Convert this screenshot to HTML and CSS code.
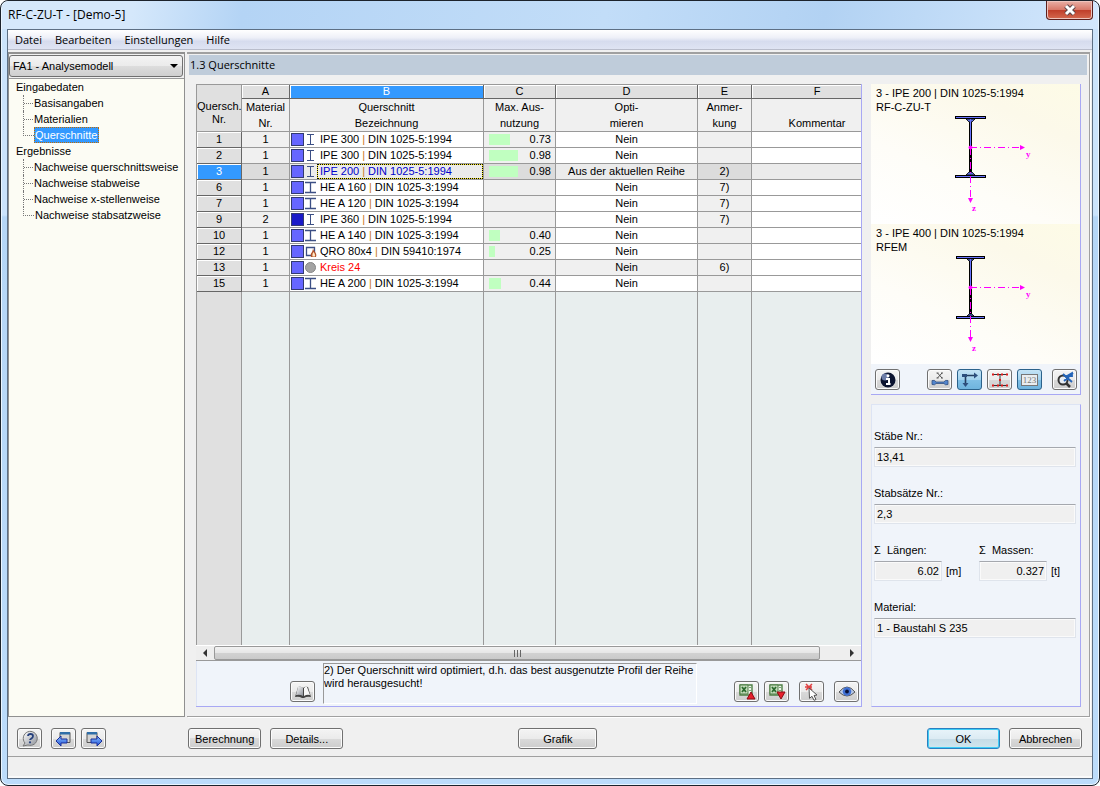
FILE: index.html
```html
<!DOCTYPE html>
<html lang="de">
<head>
<meta charset="utf-8">
<title>RF-C-ZU-T - [Demo-5]</title>
<link rel="stylesheet" href="styles.css">
</head>
<body>
<svg class="defs" aria-hidden="true">
  <defs>
    <linearGradient id="blue-fill" x1="0" y1="0" x2="0" y2="1"><stop offset="0" stop-color="#8fc4ff"/><stop offset="1" stop-color="#1d50d8"/></linearGradient>
    <linearGradient id="grey-fill" x1="0" y1="0" x2="1" y2="1"><stop offset="0" stop-color="#ffffff"/><stop offset="1" stop-color="#8b8f98"/></linearGradient>
    <symbol id="ipe" viewBox="0 0 13 13"><path d="M3 1.500h7M3 11.500h7M6.500 1v11" stroke="#3c4f85" fill="none"/></symbol>
    <symbol id="hea" viewBox="0 0 13 13"><path d="M1 1.500h11M1 11.500h11M6.500 1v11" stroke="#3c4f85" stroke-width="1.300" fill="none"/></symbol>
    <symbol id="qro" viewBox="0 0 13 13"><path d="M2.500 2.500h8v8h-8z" stroke="#3c4f85" stroke-width="1.300" fill="#fff"/><path d="M9 3q0 2 2 4 2 2 1 5H7q-1-3 1-5 1-2 1-4z" fill="#b4542a"/><path d="M9.500 7q2 2 1.500 4.500H8.500q-.5-2.500 1-4.500z" fill="#ffe9c8"/></symbol>
    <symbol id="kreis" viewBox="0 0 13 13"><circle cx="6.500" cy="6.500" r="5" fill="#a3a3a3" stroke="#858585"/></symbol>
    <symbol id="excel" viewBox="0 0 18 18"><path d="M2 2h12v10H2z" fill="#eef5ea" stroke="#4f7f46" stroke-width="1.400"/><path d="M2 2h8v9H2z" fill="#c4dcbb" stroke="#4f7f46"/><path d="M4 4l4 5M8 4L4 9" stroke="#2b6a2e" stroke-width="1.800"/><path d="M11 4.500h3M11 7.500h3" stroke="#7ca574"/></symbol>
  </defs>
</svg>
<div class="window">
  <header class="titlebar">
    <h1>RF-C-ZU-T - [Demo-5]</h1>
    <button class="close" type="button" aria-label="Schließen"><svg width="16" height="12" viewBox="0 0 16 12"><path d="M4 2l8 8M12 2l-8 8" stroke="#5a4448" stroke-width="5"/><path d="M4 2l8 8M12 2l-8 8" stroke="#fff" stroke-width="3"/></svg></button>
  </header>
  <div class="client">
    <nav class="menubar" aria-label="Menü">
      <button type="button">Datei</button><button type="button">Bearbeiten</button><button type="button">Einstellungen</button><button type="button">Hilfe</button>
    </nav>
    <div class="workspace">
      <aside class="sidebar">
        <div class="case">
          <select aria-label="Analysefall"><option>FA1 - Analysemodell</option></select>
          <svg width="8" height="4" aria-hidden="true"><path d="M0 0h8L4 4z"/></svg>
        </div>
        <nav class="tree" aria-label="Navigator">
          <a href="#eingabe">Eingabedaten</a>
          <ul>
            <li><a href="#basis">Basisangaben</a></li>
            <li><a href="#material">Materialien</a></li>
            <li><a class="active" href="#querschnitte">Querschnitte</a></li>
          </ul>
          <a href="#ergebnisse">Ergebnisse</a>
          <ul>
            <li><a href="#n1">Nachweise querschnittsweise</a></li>
            <li><a href="#n2">Nachweise stabweise</a></li>
            <li><a href="#n3">Nachweise x-stellenweise</a></li>
            <li><a href="#n4">Nachweise stabsatzweise</a></li>
          </ul>
        </nav>
      </aside>
      <main class="main">
        <h2>1.3 Querschnitte</h2>
        <div class="content">
          <section class="grid-panel">
            <div class="grid-wrap">
              <table class="grid">
                <colgroup><col class="w-nr"><col class="w-a"><col class="w-b"><col class="w-c"><col class="w-d"><col class="w-e"><col></colgroup>
                <thead>
                  <tr class="letters"><th rowspan="2" class="corner">Quersch.<br>Nr.</th><th>A</th><th class="current">B</th><th>C</th><th>D</th><th>E</th><th class="last">F</th></tr>
                  <tr class="names"><th>Material<br>Nr.</th><th>Querschnitt<br>Bezeichnung</th><th>Max. Aus-<br>nutzung</th><th>Opti-<br>mieren</th><th>Anmer-<br>kung</th><th class="last"><br>Kommentar</th></tr>
                </thead>
                <tbody>
                  <tr><th>1</th><td>1</td><td><div class="sec"><i></i><svg><use href="#ipe"/></svg><span>IPE 300 <b>|</b> DIN 1025-5:1994</span></div></td><td><div class="use"><i style="width:21px"></i>0.73</div></td><td>Nein</td><td></td><td></td></tr>
                  <tr><th>2</th><td>1</td><td><div class="sec"><i></i><svg><use href="#ipe"/></svg><span>IPE 300 <b>|</b> DIN 1025-5:1994</span></div></td><td><div class="use"><i style="width:29px"></i>0.98</div></td><td>Nein</td><td></td><td></td></tr>
                  <tr class="selected"><th>3</th><td>1</td><td><div class="sec"><i></i><svg><use href="#ipe"/></svg><span>IPE 200 <b>|</b> DIN 1025-5:1994</span></div></td><td><div class="use"><i style="width:29px"></i>0.98</div></td><td>Aus der aktuellen Reihe</td><td>2)</td><td></td></tr>
                  <tr><th>6</th><td>1</td><td><div class="sec"><i></i><svg><use href="#hea"/></svg><span>HE A 160 <b>|</b> DIN 1025-3:1994</span></div></td><td></td><td>Nein</td><td>7)</td><td></td></tr>
                  <tr><th>7</th><td>1</td><td><div class="sec"><i></i><svg><use href="#hea"/></svg><span>HE A 120 <b>|</b> DIN 1025-3:1994</span></div></td><td></td><td>Nein</td><td>7)</td><td></td></tr>
                  <tr><th>9</th><td>2</td><td><div class="sec dark"><i></i><svg><use href="#ipe"/></svg><span>IPE 360 <b>|</b> DIN 1025-5:1994</span></div></td><td></td><td>Nein</td><td>7)</td><td></td></tr>
                  <tr><th>10</th><td>1</td><td><div class="sec"><i></i><svg><use href="#hea"/></svg><span>HE A 140 <b>|</b> DIN 1025-3:1994</span></div></td><td><div class="use"><i style="width:11px"></i>0.40</div></td><td>Nein</td><td></td><td></td></tr>
                  <tr><th>12</th><td>1</td><td><div class="sec"><i></i><svg><use href="#qro"/></svg><span>QRO 80x4 <b>|</b> DIN 59410:1974</span></div></td><td><div class="use"><i style="width:6px"></i>0.25</div></td><td>Nein</td><td></td><td></td></tr>
                  <tr class="invalid"><th>13</th><td>1</td><td><div class="sec"><i></i><svg><use href="#kreis"/></svg><span>Kreis 24</span></div></td><td></td><td>Nein</td><td>6)</td><td></td></tr>
                  <tr><th>15</th><td>1</td><td><div class="sec"><i></i><svg><use href="#hea"/></svg><span>HE A 200 <b>|</b> DIN 1025-3:1994</span></div></td><td><div class="use"><i style="width:12px"></i>0.44</div></td><td>Nein</td><td></td><td></td></tr>
                  <tr class="filler"><td></td><td></td><td></td><td></td><td></td><td></td><td></td></tr>
                </tbody>
              </table>
            </div>
            <div class="scrollbar">
              <button type="button" aria-label="Nach links"><svg width="4" height="8"><path d="M4 0v8L0 4z" fill="#333"/></svg></button>
              <div class="thumb"><i></i><i></i><i></i></div>
              <button type="button" aria-label="Nach rechts"><svg width="4" height="8"><path d="M0 0v8l4-4z" fill="#333"/></svg></button>
            </div>
            <div class="grid-foot">
              <button class="btn icon" type="button" aria-label="Bibliothek"><svg width="18" height="16" viewBox="0 0 18 16"><path d="M1 13L4 3q3-1 5 1 2-2 5-1l3 10q-4-1-7 1H8q-3-2-7-1z" fill="#444"/><path d="M2 11L4 3q3-1 5 1v8q-3-2-7-1z" fill="url(#grey-fill)"/><path d="M10 4q2-2 3-1l3 8q-3-1-6 1z" fill="#f8f8f8"/></svg></button>
              <textarea class="hint" aria-label="Anmerkung" readonly rows="3">2) Der Querschnitt wird optimiert, d.h. das best ausgenutzte Profil der Reihe wird herausgesucht!</textarea>
              <div class="tools">
                <button class="btn icon" type="button" aria-label="Excel-Export"><svg width="18" height="18" viewBox="0 0 18 18"><use href="#excel"/><path d="M13 9l4 7H9z" fill="#e8202c" stroke="#8c0a14"/></svg></button>
                <button class="btn icon" type="button" aria-label="Excel-Import"><svg width="18" height="18" viewBox="0 0 18 18"><use href="#excel"/><path d="M9 9h8l-4 7z" fill="#e8202c" stroke="#8c0a14"/></svg></button>
                <button class="btn icon gap" type="button" aria-label="Stab wählen"><svg width="18" height="18" viewBox="0 0 18 18"><path d="M3 1l6 6M9 1L3 7M2 4h7" stroke="#e04040" stroke-width="1.500"/><path d="M6 5l8 7-3 .5 2 4-2 .8-2-4-2.500 2z" fill="#fff" stroke="#555"/></svg></button>
                <button class="btn icon gap" type="button" aria-label="Ansicht"><svg width="18" height="18" viewBox="0 0 18 18"><path d="M1 9q8-10 16 0-8 8-16 0z" fill="#b9c9e6" stroke="#555"/><circle cx="9" cy="8.500" r="4.300" fill="#3f70d4"/><circle cx="9" cy="8.500" r="1.900" fill="#0a1138"/></svg></button>
              </div>
            </div>
          </section>
          <div class="details">
            <section class="preview">
              <figure>
                <figcaption>3 - IPE 200 | DIN 1025-5:1994<br>RF-C-ZU-T</figcaption>
                <svg width="100" height="98" viewBox="0 4 100 98"><path d="M25 7.500h31M25 66.500h31" stroke="#000" stroke-width="3"/><path d="M40.500 8v58" stroke="#000" stroke-width="3"/><path d="M36 9l3 3h3l3-3zM36 65l3-3h3l3 3z" fill="#5b6cd8" stroke="#000" stroke-width=".8"/><path d="M26 7.500h29M26 66.500h29M40.500 9v28" stroke="#6a74ff"/><circle cx="40.500" cy="37.500" r="2" fill="#f0f"/><path d="M40 37.500h50" stroke="#f0f" stroke-dasharray="7 3 1 3"/><path d="M40.500 38v52" stroke="#f0f" stroke-dasharray="7 3 1 3"/><path d="M90 35l5 2.500-5 2.500zM38 88h5l-2.500 5z" fill="#f0f"/><text x="96" y="47">y</text><text x="42" y="101">z</text></svg>
              </figure>
              <figure>
                <figcaption>3 - IPE 400 | DIN 1025-5:1994<br>RFEM</figcaption>
                <svg width="100" height="98" viewBox="0 4 100 98"><path d="M26 7.500h29M26 67.500h29" stroke="#000" stroke-width="3"/><path d="M40.500 8v59" stroke="#000" stroke-width="3"/><path d="M37 9l2 2h3l2-2zM37 66l2-2h3l2 2z" fill="#5b6cd8" stroke="#000" stroke-width=".8"/><path d="M27 7.500h27M27 67.500h27M40.500 9v28" stroke="#6a74ff"/><circle cx="40.500" cy="37.500" r="2" fill="#f0f"/><path d="M40 37.500h50" stroke="#f0f" stroke-dasharray="7 3 1 3"/><path d="M40.500 38v50" stroke="#f0f" stroke-dasharray="7 3 1 3"/><path d="M90 35l5 2.500-5 2.500zM38 87h5l-2.500 5z" fill="#f0f"/><text x="96" y="47">y</text><text x="42" y="101">z</text></svg>
              </figure>
              <div class="preview-tools">
                <button class="btn icon" type="button" aria-label="Info"><svg width="18" height="18" viewBox="0 0 18 18"><circle cx="9" cy="9" r="7.500" fill="#0c1430"/><circle cx="6" cy="6" r="3.500" fill="#6d7da8"/><path d="M7 8h3v5h1.500M7 13h4" stroke="#fff" stroke-width="2" fill="none"/><circle cx="9" cy="4.700" r="1.500" fill="#fff"/></svg></button>
                <button class="btn icon info-gap" type="button" aria-label="Bemaßung"><svg width="18" height="18" viewBox="0 0 18 18"><path d="M6.500 2l4.500 5M11 2L6.500 7M5.500 2h2M10 2h2M5.500 7h2M10 7h2" stroke="#444" stroke-width=".9"/><path d="M1 9.500q3-1 4 1.500h8q1-2.500 4-1.500v4q-3 1-4-1H5q-1 2-4 1z" fill="#5184cc" stroke="#345180" stroke-width=".8"/></svg></button>
                <button class="btn icon on" type="button" aria-label="Achsen"><svg width="20" height="18" viewBox="0 0 20 18"><path d="M3 4.500h12M5.500 3v11" stroke="#263e60" stroke-width="1.600"/><path d="M14 1.500l4 3-4 3zM2.500 12h6l-3 4zM2 3h5v3H2z" fill="#2d4f7e"/></svg></button>
                <button class="btn icon" type="button" aria-label="Querschnitt"><svg width="18" height="18" viewBox="0 0 18 18"><path d="M2 3.500h14M2 14.500h14M9 3v12" stroke="#333" fill="none"/><path d="M1 2.500h2v2H1zM6 2.500h2v2H6zM10 2.500h2v2h-2zM15 2.500h2v2h-2zM8 8h2v2H8zM1 13.500h2v2H1zM6 13.500h2v2H6zM10 13.500h2v2h-2zM15 13.500h2v2h-2z" fill="#e01818"/></svg></button>
                <button class="btn icon on num" type="button"><span>123</span></button>
                <button class="btn icon gap" type="button" aria-label="Ansicht zurücksetzen"><svg width="20" height="18" viewBox="0 0 20 18"><circle cx="8" cy="9" r="4.500" fill="#e8eef5" stroke="#333" stroke-width="2"/><path d="M11 12l4 4" stroke="#333" stroke-width="2.500"/><path d="M8 3l9 8M18 2l-9 8M12 5l5-3v3zM11 6l6 5" stroke="#2464b8" stroke-width="1.800" fill="#6aa5e8"/></svg></button>
              </div>
            </section>
            <form class="fields">
              <div class="field"><label for="staebe">Stäbe Nr.:</label><input id="staebe" value="13,41" readonly></div>
              <div class="field"><label for="saetze">Stabsätze Nr.:</label><input id="saetze" value="2,3" readonly></div>
              <div class="pair">
                <div class="field sum"><label for="laengen">Σ&nbsp; Längen:</label><div><input id="laengen" value="6.02" readonly><span>[m]</span></div></div>
                <div class="field sum"><label for="massen">Σ&nbsp; Massen:</label><div><input id="massen" value="0.327" readonly><span>[t]</span></div></div>
              </div>
              <div class="field"><label for="mat">Material:</label><input id="mat" value="1 - Baustahl S 235" readonly></div>
            </form>
          </div>
        </div>
      </main>
    </div>
    <footer class="actions">
      <button class="btn icon" type="button" aria-label="Hilfe"><svg width="18" height="18" viewBox="0 0 18 18"><path d="M2 16l2-3a7 7 0 1 1 3 2z" fill="url(#grey-fill)" stroke="#777"/><path d="M7 6q0-2 2.500-2T12 6q0 1.500-1.500 2.500T9 10" stroke="#26407c" stroke-width="1.800" fill="none"/><circle cx="9" cy="12.300" r="1.100" fill="#26407c"/></svg></button>
      <button class="btn icon" type="button" aria-label="Zurück"><svg width="18" height="18" viewBox="0 0 18 18"><path d="M5 2.500h10v10H5z" fill="#d4d4d4" stroke="#555"/><path d="M5 2h10v2.500H5z" fill="#2f6ea8"/><path d="M1 11l5-5v3h6v4H6v3z" fill="url(#blue-fill)" stroke="#1b2f9a"/></svg></button>
      <button class="btn icon" type="button" aria-label="Weiter"><svg width="18" height="18" viewBox="0 0 18 18"><path d="M2 2.500h10v10H2z" fill="#d4d4d4" stroke="#555"/><path d="M2 2h10v2.500H2z" fill="#2f6ea8"/><path d="M17 11l-5-5v3H6v4h6v3z" fill="url(#blue-fill)" stroke="#1b2f9a"/></svg></button>
      <button class="btn calc" type="button">Berechnung</button>
      <button class="btn" type="button">Details...</button>
      <button class="btn graphic" type="button">Grafik</button>
      <button class="btn ok" type="button">OK</button>
      <button class="btn" type="button">Abbrechen</button>
    </footer>
    <div class="statusbar"></div>
  </div>
</div>
</body>
</html>
```
FILE: styles.css
```css
* { box-sizing: border-box; }
body {
  margin: 0;
  background: #fff;
  color: #000;
  font: 11px/14px "Liberation Sans", Arial, sans-serif;
}
button, input, select, textarea { font: inherit; color: inherit; }
.defs { position: absolute; width: 0; height: 0; }
svg { display: block; flex: none; }

/* Window frame */
.window {
  min-height: 100vh;
  display: flex;
  flex-direction: column;
  padding: 0 6px 6px;
  border: 1px solid #1c232c;
  border-radius: 8px;
  background: linear-gradient(#cbe3fb 0, #cbe3fb 214px, #b5d6f6 216px, #bcdcfb 100%);
  box-shadow: inset 0 0 0 1px #eaf5ff;
}
.titlebar {
  height: 28px;
  display: flex;
  justify-content: space-between;
  align-items: flex-start;
  margin: 0 -5px;
  padding: 0 5px 0 6px;
  border-radius: 7px 7px 0 0;
  background: linear-gradient(100deg, #d5e8fb 0, #d5e8fb 12%, #b4d4f5 22%, #c2ddf8 55%, #b2d2f3 75%, #d3e7fc 100%);
}
h1 {
  margin: 0;
  padding-top: 5px;
  font: 12px/18px "Open Sans", sans-serif;
}
.close {
  width: 47px;
  height: 19px;
  display: grid;
  place-items: center;
  padding: 0;
  border: 1px solid #5c1f1c;
  border-top: 0;
  border-radius: 0 0 4px 4px;
  background: linear-gradient(#e9b0a6 0, #d8796a 48%, #bf3d29 50%, #d5694f 100%);
  box-shadow: inset 0 0 0 1px #eec4bd;
}
.client {
  flex: 1;
  display: flex;
  flex-direction: column;
  border: 1px solid #5d6f84;
  background: #f0f0f0;
}
.menubar {
  height: 20px;
  display: flex;
  padding-left: 1px;
  background: linear-gradient(#fff 0, #eef0f8 40%, #d6dcee 60%, #dfe4f3 100%);
  border-bottom: 1px solid #b9bdcb;
}
.menubar button {
  padding: 0 7px 0 6px;
  border: 0;
  background: none;
  font: 11px/19px "Open Sans", sans-serif;
}

/* Workspace */
.workspace {
  flex: 1;
  display: grid;
  grid-template-columns: 177px minmax(0, 1fr);
  gap: 2px;
  padding: 2px 2px 0 0;
}
.sidebar {
  display: flex;
  flex-direction: column;
  border: 1px solid #909090;
  border-top-width: 2px;
}
.case {
  display: grid;
  grid-template-columns: 1fr 8px;
  align-items: center;
  height: 22px;
  margin: 1px 1px 1px 0;
  padding-right: 4px;
  border: 1px solid #707070;
  border-radius: 3px;
  background: linear-gradient(#f3f3f3, #ebebeb 50%, #dddddd 50%, #cfcfcf);
}
.case select {
  grid-area: 1 / 1 / 2 / 3;
  height: 20px;
  padding: 0 3px;
  appearance: none;
  border: 0;
  background: none;
}
.case svg { grid-area: 1 / 2; pointer-events: none; }
.tree {
  flex: 1;
  padding: 0 0 0 7px;
  border-top: 1px solid #999;
  background: #fcfcf4;
  line-height: 16px;
}
.tree a { display: block; color: inherit; text-decoration: none; white-space: nowrap; }
.tree ul { margin: 0 0 0 7px; padding: 0; list-style: none; }
.tree li { display: flex; height: 16px; border-left: 1px dotted #777; }
.tree li::before { content: ""; flex: none; width: 9px; height: 8px; border-bottom: 1px dotted #777; }
.tree li:last-child { border-left: 0; }
.tree li:last-child::before { width: 10px; border-left: 1px dotted #777; }
.tree li a { padding: 0 2px 0 1px; }
.tree li a.active { background: #39f; color: #fff; outline: 1px dotted #c26b00; outline-offset: -1px; }

.main {
  display: flex;
  flex-direction: column;
  border: 1px solid #a0a0a0;
  border-width: 2px 1px 1px 0;
  padding: 1px 2px 9px 2px;
  box-shadow: 1px 1px 0 #fff;
}
h2 {
  margin: 0 0 9px;
  height: 20px;
  padding-left: 1px;
  background: #bfccda;
  font: 11px/19px "Open Sans", sans-serif;
}
.content {
  flex: 1;
  display: grid;
  grid-template-columns: minmax(0, 1fr) 210px;
  gap: 9px;
  padding: 0 6px 0 7px;
}

/* Data grid */
.grid-panel {
  display: flex;
  flex-direction: column;
  border-right: 1px solid #a8a8f4;
  border-bottom: 1px solid #a8a8f4;
  background: #f0f4fa;
}
.grid-wrap { flex: 1; display: grid; }
.grid {
  width: 100%;
  height: 100%;
  table-layout: fixed;
  border-spacing: 0;
  border: solid #999;
  border-width: 1px 0 0 1px;
  text-align: center;
  white-space: nowrap;
}
.w-nr { width: 45px; }
.w-a { width: 48px; }
.w-b { width: 194px; }
.w-c { width: 72px; }
.w-d { width: 142px; }
.w-e { width: 54px; }
.grid th, .grid td {
  padding: 0;
  border: solid #999;
  border-width: 0 1px 1px 0;
  font-weight: normal;
  line-height: 15px;
}
.grid tr > :last-child { border-right: 0; }
.grid tbody tr { height: 16px; }
.grid td { background: #fff; }
.grid td:nth-child(2), .grid td:nth-child(4), .grid td:nth-child(6), .names th { background: #f0f0f0; }
.grid tbody th, .grid .letters th {
  background: #e0e0e0;
  border-right-color: #666;
  border-bottom-color: #666;
  box-shadow: inset 1px 1px 0 #fff;
}
.grid .letters th { height: 14px; line-height: 13px; }
.grid .letters .current { background: #39f; color: #fff; }
.grid .letters .corner { padding-top: 10px; line-height: 13px; box-shadow: none; border-color: #999; }
.grid .names th { height: 33px; line-height: 16px; vertical-align: top; }
.grid thead .last { padding-left: 21px; }
.grid .selected td { background: #ebebeb; }
.grid .selected td:nth-child(2), .grid .selected td:nth-child(4), .grid .selected td:nth-child(6) { background: #dcdcdc; }
.grid .selected th { background: #39f; color: #fff; }
.grid .invalid td:nth-child(5) { background: #f0f0f0; }
.grid .filler { height: auto; }
.grid .filler td { background: #e8eeee; border-bottom: 0; }
.grid .filler td:first-child { background: #e0e0e0; }
.sec { display: flex; align-items: center; height: 15px; padding-left: 1px; text-align: left; }
.sec i { width: 13px; height: 13px; border: 1px solid #333a70; background: #66f; }
.sec.dark i { background: #1a1ac8; }
.sec svg { width: 13px; height: 13px; }
.sec span { flex: 1; height: 15px; padding-left: 3px; }
.sec b { font-weight: normal; color: #c87820; }
.selected .sec span { color: #00c; border: 1px dotted #000; background: linear-gradient(#ebebeb, #ebebeb) padding-box, #ffee20 border-box; line-height: 13px; padding-left: 2px; }
.invalid .sec span { color: #f00; }
.use { display: flex; justify-content: space-between; align-items: center; height: 15px; padding: 0 4px 0 5px; }
.use i { height: 11px; background: #c0ffc0; }

.scrollbar {
  display: flex;
  height: 16px;
  border-top: 1px solid #fff;
  border-bottom: 1px solid #999;
  background: #eee;
}
.scrollbar button { width: 18px; display: grid; place-items: center; padding: 0; border: 0; background: none; }
.thumb {
  flex: 1;
  display: flex;
  justify-content: center;
  align-items: center;
  gap: 2px;
  margin-right: 23px;
  border: 1px solid #999;
  border-radius: 2px;
  background: linear-gradient(#f2f2f2, #e6e6e6 50%, #d2d2d2 50%, #cacaca);
}
.thumb i { width: 1px; height: 7px; background: #666; }
.grid-foot { display: flex; align-items: flex-start; padding: 2px 2px 2px 94px; height: 45px; border-left: 1px solid #dde4f4; }
.grid-foot > .icon { margin: 18px 0 0 -1px; }
.hint {
  flex: 0 1 374px;
  height: 41px;
  margin: 0 0 0 8px;
  padding: 0;
  border: solid;
  border-width: 1px;
  border-color: #999 #fff #fff #999;
  background: transparent;
  line-height: 13px;
  resize: none;
  overflow: hidden;
}
.tools { display: flex; gap: 5px; margin: 18px 0 0 auto; }

/* Buttons */
.btn {
  min-width: 73px;
  height: 21px;
  display: grid;
  place-items: center;
  padding: 0 6px;
  border: 1px solid #707070;
  border-radius: 3px;
  background: linear-gradient(#f4f4f4, #ebebeb 50%, #dadada 50%, #cdcdcd);
  box-shadow: inset 0 0 0 1px #fbfbfb;
}
.btn.icon { min-width: 25px; width: 25px; padding: 0; }
.btn.gap { margin-left: 5px; }
.btn.on { border-color: #2c628b; background: linear-gradient(#c4e3f5, #a3d3ef 50%, #81c0e6 50%, #6fb4de); box-shadow: none; }
.num span { border: 1px solid #777; background: #e9edf0; color: #777; font: 9px/10px "Liberation Serif", serif; padding: 0 1px; }

/* Section details */
.details { display: flex; flex-direction: column; gap: 9px; }
.preview {
  border: solid #a8a8f4;
  border-width: 0 1px 1px 0;
  background: #f0f4fa;
}
figure {
  height: 140px;
  margin: 0;
  padding: 2px 5px 0;
  background: linear-gradient(25deg, #fff 0, #fefdf8 35%, #fcf9ea 75%, #fdfbe6 100%);
}
figcaption { line-height: 14px; }
figure svg { margin-left: 54px; overflow: visible; }
figure text { fill: #f0f; font: bold 9px "Liberation Serif", serif; }
.preview-tools { display: flex; gap: 5px; padding: 5px 3px 4px 4px; }
.preview-tools .info-gap { margin-left: auto; }
.preview-tools .gap { margin-left: 5px; }
.fields {
  flex: 1;
  display: flex;
  flex-direction: column;
  gap: 19px;
  padding: 24px 4px 0 2px;
  border: 1px solid;
  border-color: #dde4f4 #a8a8f4 #a8a8f4 #dde4f4;
  background: #f0f4fa;
}
.field { display: flex; flex-direction: column; gap: 4px; }
.field input {
  width: 100%;
  height: 20px;
  padding: 0 2px;
  border: 1px solid;
  border-color: #a5a8ae #dfe4ec #dfe4ec #dfe4ec;
  box-shadow: inset 0 0 0 1px #fafafa;
  background: #f0f0f0;
}
.pair { display: grid; grid-template-columns: 1fr 1fr; gap: 8px; }
.sum div { display: flex; align-items: center; gap: 4px; }
.field.sum input { width: 68px; text-align: right; }

/* Footer */
.actions { display: flex; align-items: center; gap: 9px; padding: 11px 10px 7px 9px; }
.actions .icon + .icon + .icon { margin-left: -4px; }
.calc { margin-left: 73px; }
.graphic { min-width: 79px; margin-left: 166px; }
.ok { margin-left: auto; border-color: #2a7fc0; background: linear-gradient(#e8f4fa, #dcebf3 50%, #c5dbe6 50%, #cfe6ee); box-shadow: inset 0 0 0 1px #3fcdf5; }
.statusbar { height: 22px; border-top: 1px solid #a0a0a0; border-bottom: 2px solid #fafafa; }
```
